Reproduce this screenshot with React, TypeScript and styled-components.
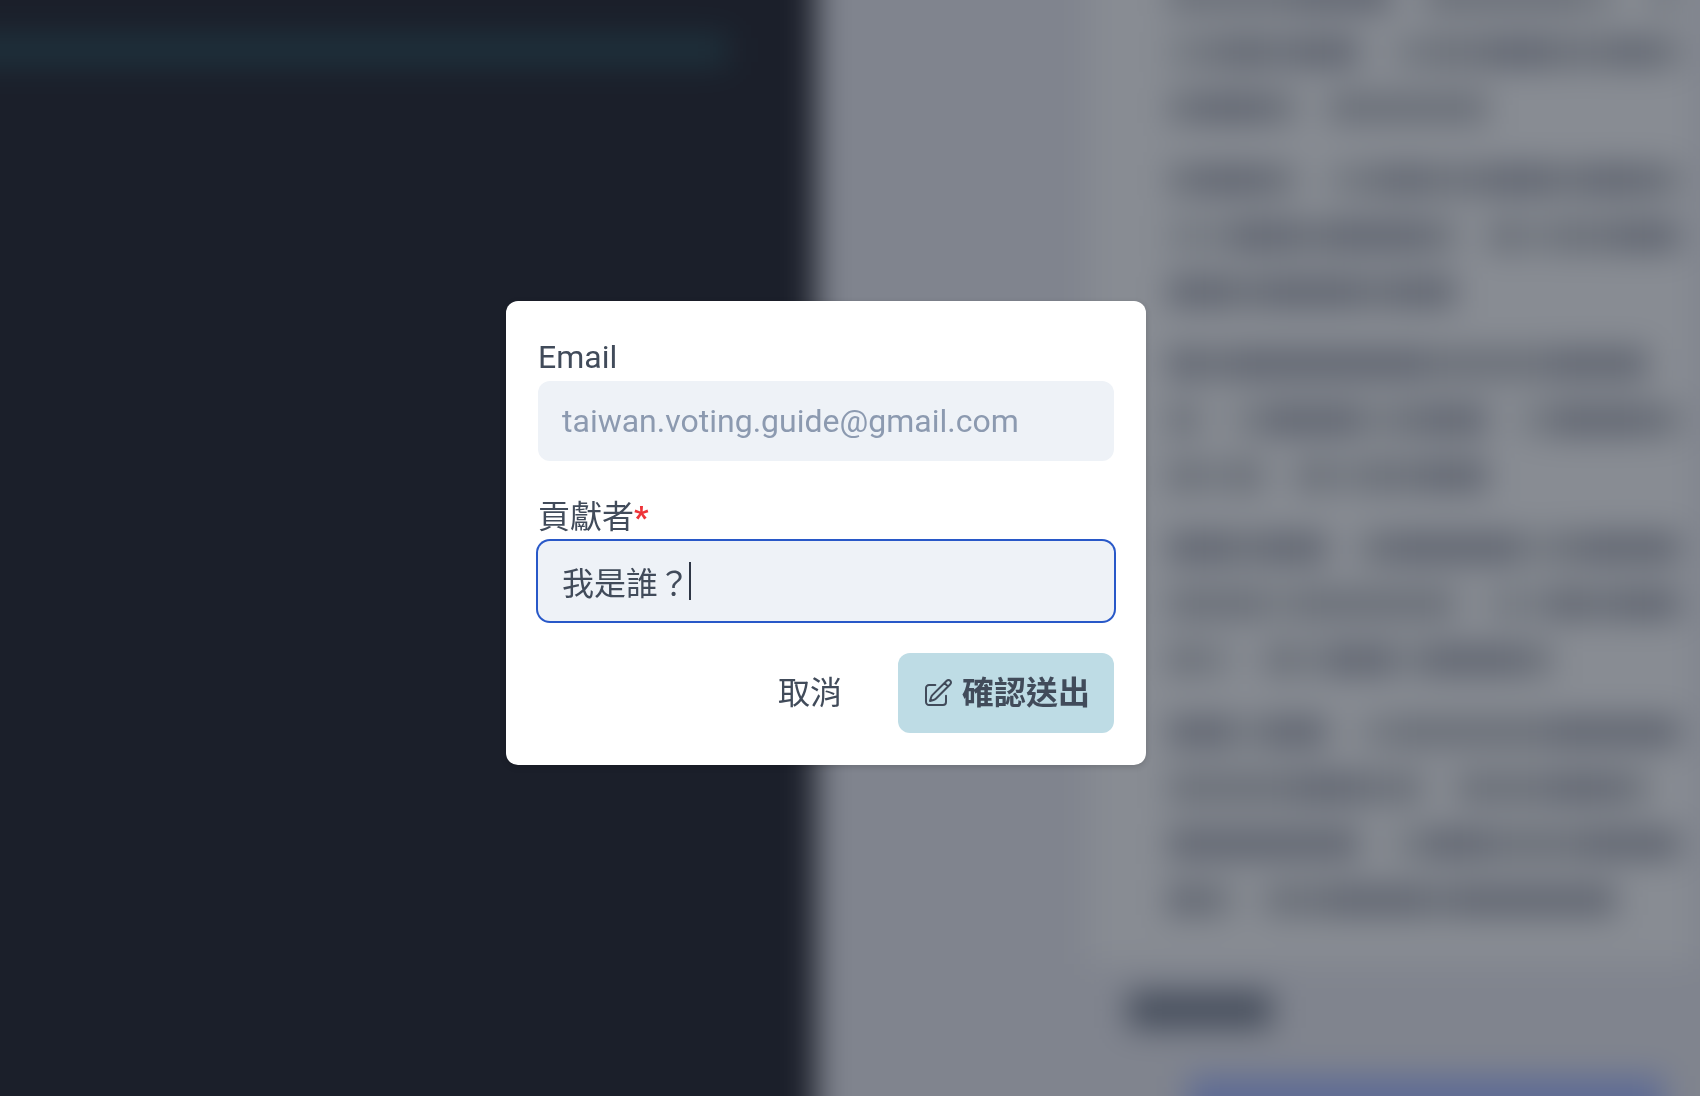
import React from "react";
import styled, { createGlobalStyle } from "styled-components";

const GlobalStyle = createGlobalStyle`
  *, *::before, *::after { box-sizing: border-box; }
  body {
    margin: 0;
    background: #1b1f2a;
    color: #414b5a;
    font-family: Roboto, "Noto Sans CJK TC", sans-serif;
    font-size: 32px;
    line-height: 48px;
  }
`;

// Reaches past the window on every side so that the blur never fades at its edges.
const Page = styled.main`
  position: fixed;
  inset: -64px;
  display: grid;
  grid-template-columns: calc(64px + 48vw) 1fr;
  overflow: hidden;
  filter: blur(16px);
`;

const Editor = styled.section`
  padding-top: 100px;
  background: #1b1f2a;
`;

const CodeLine = styled.div`
  width: 90%;
  height: 28px;
  background: #1e343f;
`;

const Preview = styled.section`
  padding: 0 68px 0 272px;
  background: #80848e;
  overflow: hidden;
`;

const Article = styled.article`
  display: flex;
  flex-direction: column;
  gap: 16px;
  padding: 32px 16px 36px 80px;
  background: #888c93;
`;

const Line = styled.div`
  display: flex;
  align-items: center;
  height: 56px;
`;

const Glyph = styled.span<{ $density: number }>`
  flex: 0 0 32px;
  height: 32px;
  background: #4b515e;
  opacity: ${(p) => [0, 0.32, 0.5, 0.64][p.$density]};
`;

const Heading = styled.div`
  width: 144px;
  height: 36px;
  margin: 28px 0 48px 40px;
  background: #454d5b;
`;

const Banner = styled.div`
  height: 160px;
  margin: 0 32px 0 100px;
  background: #5e6b94;
`;

const Overlay = styled.div`
  position: fixed;
  inset: 0;
  display: flex;
  align-items: center;
  justify-content: center;
  padding: 0 48px 30px 0;
`;

const Dialog = styled.form`
  display: flex;
  flex-direction: column;
  gap: 32px;
  width: 640px;
  max-width: 100%;
  padding: 32px;
  border-radius: 12px;
  background: #fff;
  box-shadow: 0 2px 6px rgba(0, 0, 0, 0.16);
`;

const Field = styled.div`
  display: flex;
  flex-direction: column;
`;

const Label = styled.label`
  height: 48px;
`;

const Required = styled.span`
  color: #ee3338;
  font-weight: 700;
`;

const InputBox = styled.div`
  position: relative;
  display: flex;
`;

const Input = styled.input<{ $active?: boolean }>`
  width: 100%;
  height: 80px;
  padding: 0 24px;
  border: 0;
  border-radius: 12px;
  outline: 0;
  background: #eef2f7;
  box-shadow: ${(p) => (p.$active ? "0 0 0 2px #2858c8" : "none")};
  color: inherit;
  caret-color: transparent;
  font: inherit;

  &::placeholder {
    color: #8c9ab0;
    opacity: 1;
  }
`;

const Caret = styled.span`
  position: absolute;
  top: 21px;
  left: calc(23px + 4em);
  width: 2px;
  height: 38px;
  background: #2f3746;
`;

const Actions = styled.div`
  display: flex;
  justify-content: flex-end;
  gap: 24px;
`;

const Button = styled.button<{ $primary?: boolean }>`
  display: flex;
  align-items: center;
  gap: 8px;
  height: 80px;
  padding: 0 ${(p) => (p.$primary ? 24 : 32)}px;
  border: 0;
  border-radius: 12px;
  background: ${(p) => (p.$primary ? "#bedce5" : "transparent")};
  color: inherit;
  font: inherit;
  font-weight: ${(p) => (p.$primary ? 700 : 400)};
  cursor: pointer;
`;

const EditIcon = () => (
  <svg
    width="32"
    height="32"
    viewBox="0 0 24 24"
    fill="none"
    stroke="currentColor"
    strokeWidth="1.5"
    strokeLinecap="round"
    strokeLinejoin="round"
    aria-hidden="true"
  >
    <path d="m16.862 4.487 1.687-1.688a1.875 1.875 0 1 1 2.652 2.652L10.582 16.07a4.5 4.5 0 0 1-1.897 1.13L6 18l.8-2.685a4.5 4.5 0 0 1 1.13-1.897l8.932-8.931Zm0 0L19.5 7.125" />
    <path d="M18 14v4.75A2.25 2.25 0 0 1 15.75 21H5.25A2.25 2.25 0 0 1 3 18.75V8.25A2.25 2.25 0 0 1 5.25 6H10" />
  </svg>
);

// One digit per character cell: 0 is a gap, 3 is the densest glyph.
const paragraphs = [
  ["2222333022222101", "1232330122332232", "2332022222"],
  ["2332012322332332", "1133233320212233", "332333233"],
  ["323333332222333", "2013331233013332", "2120212233"],
  ["3323302333312333", "2221222220113233", "210213313332"],
  ["3313301222223333", "222233220222332", "3333330133222333", "32022333233333"],
];

export default function App() {
  return (
    <>
      <GlobalStyle />
      <Page aria-hidden="true">
        <Editor>
          <CodeLine />
        </Editor>
        <Preview>
          <Article>
            {paragraphs.map((lines, p) => (
              <div key={p}>
                {lines.map((line, l) => (
                  <Line key={l}>
                    {[...line].map((digit, g) => (
                      <Glyph key={g} $density={Number(digit)} />
                    ))}
                  </Line>
                ))}
              </div>
            ))}
          </Article>
          <Heading />
          <Banner />
        </Preview>
      </Page>
      <Overlay>
        <Dialog
          role="dialog"
          aria-modal="true"
          lang="zh-Hant"
          onSubmit={(e) => e.preventDefault()}
        >
          <Field>
            <Label htmlFor="email">Email</Label>
            <Input id="email" type="email" placeholder="taiwan.voting.guide@gmail.com" />
          </Field>
          <Field>
            <Label htmlFor="contributor">
              貢獻者<Required>*</Required>
            </Label>
            <InputBox>
              <Input id="contributor" type="text" defaultValue="我是誰？" required $active />
              <Caret />
            </InputBox>
          </Field>
          <Actions>
            <Button type="button">取消</Button>
            <Button type="submit" $primary>
              <EditIcon />
              確認送出
            </Button>
          </Actions>
        </Dialog>
      </Overlay>
    </>
  );
}
